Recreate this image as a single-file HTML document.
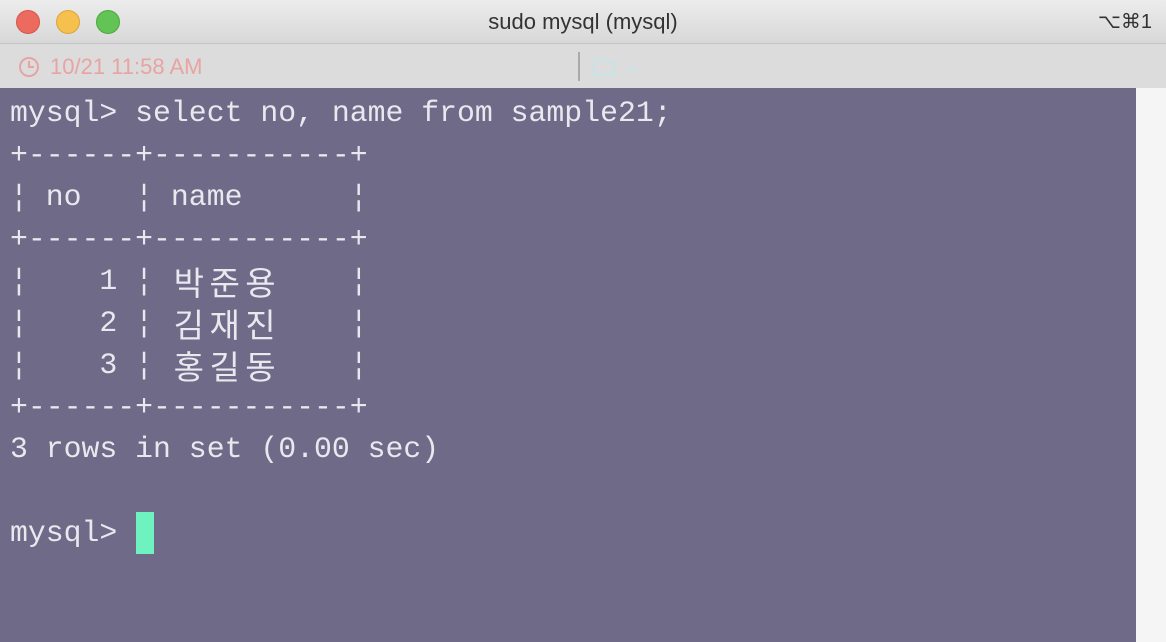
<!DOCTYPE html>
<html><head><meta charset="utf-8"><style>
body{margin:0;width:1166px;height:642px;overflow:hidden;background:#f5f5f5;font-family:"Liberation Sans",sans-serif;position:relative}
.tb{position:absolute;left:0;top:0;width:1166px;height:44px;background:linear-gradient(#ececec,#d8d8d8);border-bottom:1px solid #c4c4c4;box-sizing:border-box}
.dot{position:absolute;top:10px;width:24px;height:24px;border-radius:50%}
.title{position:absolute;top:0;left:0;width:1166px;text-align:center;line-height:44px;font-size:22px;color:#333}
.sc{position:absolute;right:14px;top:0;line-height:44px;font-size:20px;color:#333}
.bar2{position:absolute;left:0;top:44px;width:1166px;height:44px;background:#dcdcdc}
.time{position:absolute;left:50px;top:45px;line-height:44px;font-size:22px;color:#e8a3a3}
.term{position:absolute;left:0;top:88px;width:1136px;height:554px;background:#6e6a88}
.l{position:absolute;left:10px;font-family:"Liberation Mono",monospace;font-size:29.8px;color:#e8e8ee;white-space:pre;line-height:42px}
.k{display:inline-block;width:35.8px;font-family:"Noto Sans CJK KR","Liberation Mono",sans-serif;font-size:33px;text-align:center;line-height:42px;vertical-align:top}
</style></head><body>
<div class="tb">
<div class="dot" style="left:16px;background:#ed6a5e;border:1px solid #d6554a;box-sizing:border-box"></div>
<div class="dot" style="left:56px;background:#f6c04f;border:1px solid #dca53a;box-sizing:border-box"></div>
<div class="dot" style="left:96px;background:#61c454;border:1px solid #4ea83f;box-sizing:border-box"></div>
<div class="title">sudo mysql (mysql)</div>
<div class="sc">⌥⌘1</div>
</div>
<div class="bar2"></div>
<svg style="position:absolute;left:18px;top:56px" width="22" height="22"><circle cx="11" cy="11" r="9" fill="none" stroke="#e8a3a3" stroke-width="2"/><path d="M11 5v6h5" fill="none" stroke="#e8a3a3" stroke-width="2"/></svg>
<div class="time">10/21 11:58 AM</div>
<div style="position:absolute;left:578px;top:52px;width:2px;height:29px;background:#aaa"></div>
<svg style="position:absolute;left:592px;top:55px" width="50" height="24"><path d="M2 4h8l2 3h10v13H2z" fill="none" stroke="#bfe6ea" stroke-width="1.5"/><path d="M35 14q2-3 4 0t4 0" fill="none" stroke="#bfe6ea" stroke-width="1.5"/></svg>
<div class="term"></div>
<div class="l" style="top:92px">mysql&gt; select no, name from sample21;</div>
<div class="l" style="top:134px">+------+-----------+</div>
<div class="l" style="top:176px">¦ no   ¦ name      ¦</div>
<div class="l" style="top:218px">+------+-----------+</div>
<div class="l" style="top:260px">¦    1 ¦ <span class="k">박</span><span class="k">준</span><span class="k">용</span>    ¦</div>
<div class="l" style="top:302px">¦    2 ¦ <span class="k">김</span><span class="k">재</span><span class="k">진</span>    ¦</div>
<div class="l" style="top:344px">¦    3 ¦ <span class="k">홍</span><span class="k">길</span><span class="k">동</span>    ¦</div>
<div class="l" style="top:386px">+------+-----------+</div>
<div class="l" style="top:428px">3 rows in set (0.00 sec)</div>
<div class="l" style="top:512px">mysql&gt; </div>
<div style="position:absolute;left:136px;top:512px;width:18px;height:42px;background:#6ef2c0"></div>
</body></html>
